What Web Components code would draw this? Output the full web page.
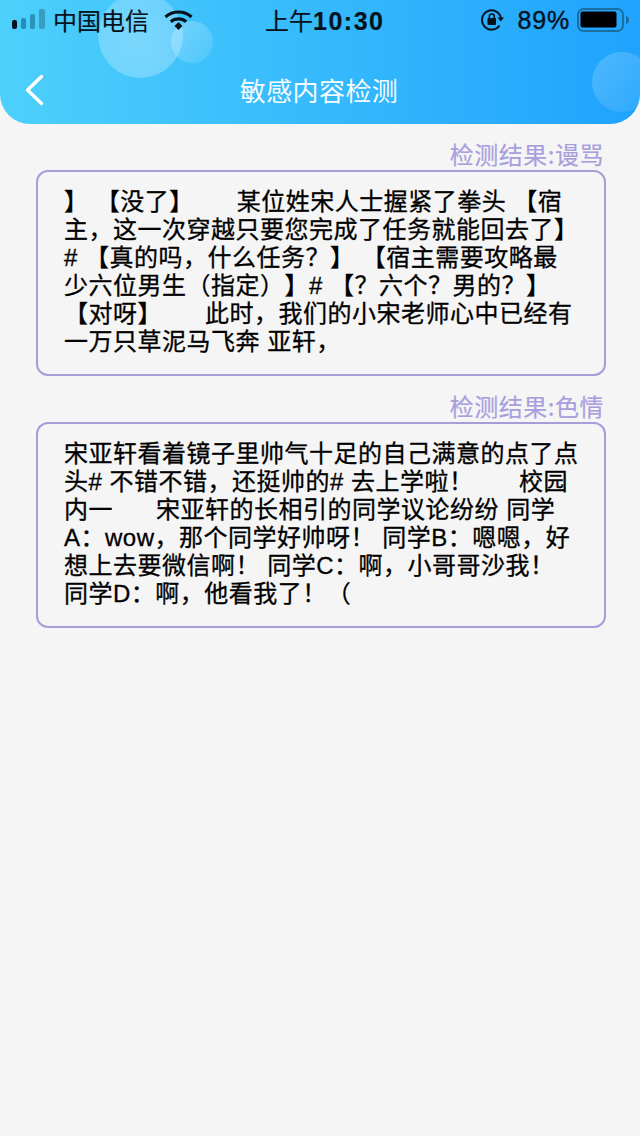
<!DOCTYPE html>
<html>
<head>
<meta charset="utf-8">
<style>
html,body{margin:0;padding:0;background:#f5f5f5;}
body{width:640px;height:1136px;overflow:hidden;font-family:"Noto Sans CJK SC","Liberation Sans",sans-serif;}
</style>
</head>
<body>
<app-page>
  <nav-header title-text="敏感内容检测"></nav-header>
  <result-card label="检测结果:谩骂">】 【没了】      某位姓宋人士握紧了拳头 【宿
主，这一次穿越只要您完成了任务就能回去了】
# 【真的吗，什么任务？】 【宿主需要攻略最
少六位男生（指定）】# 【？六个？男的？】
【对呀】      此时，我们的小宋老师心中已经有
一万只草泥马飞奔 亚轩，</result-card>
  <result-card label="检测结果:色情">宋亚轩看着镜子里帅气十足的自己满意的点了点
头# 不错不错，还挺帅的# 去上学啦！      &#8202;校园
内一      宋亚轩的长相引的同学议论纷纷 同学
A：wow，那个同学好帅呀！ 同学B：嗯嗯，好
想上去要微信啊！ 同学C：啊，小哥哥沙我！
同学D：啊，他看我了！（</result-card>
</app-page>
<script>
class AppPage extends HTMLElement{
    constructor(){
        super()
        const shadow=this.attachShadow({mode:"open"})
        shadow.innerHTML=`
        <style>
        :host{display:flex;flex-direction:column;width:640px;height:1136px;background:#f5f5f5;}
        .list{display:flex;flex-direction:column;gap:16px;padding:16px 34px 0 36px;}
        </style>
        <slot name="head"></slot>
        <div class="list"><slot></slot></div>`
    }
    connectedCallback(){
        const head=this.querySelector('nav-header')
        if(head) head.setAttribute('slot','head')
    }
}
customElements.define('app-page',AppPage);

class StatusBar extends HTMLElement{
    constructor(){
        super()
        const shadow=this.attachShadow({mode:"open"})
        shadow.innerHTML=`
        <style>
        :host{display:flex;align-items:center;height:40px;padding:0 11px 0 12px;color:#06121c;font-size:24px;line-height:40px;position:relative;}
        .left,.right{display:flex;align-items:center;}
        .carrier{margin-left:8px;-webkit-text-stroke:.2px #06121c;}
        .wifi{margin-left:15px;}
        .time{position:absolute;left:265px;top:0;white-space:nowrap;-webkit-text-stroke:.2px #06121c;}
        .time b{font-family:"Liberation Sans",sans-serif;font-weight:700;font-size:25px;letter-spacing:1.500px;}
        .right{margin-left:auto;}
        .pct{margin:0 7px 0 14px;font-family:"Liberation Sans",sans-serif;font-size:25px;letter-spacing:.8px;-webkit-text-stroke:.4px #06121c;}
        svg{display:block;}
        </style>
        <div class="left">
          <svg width="33" height="22" viewBox="0 0 33 22">
            <rect x="0" y="11" width="5" height="9" rx="2" fill="#06121c"/>
            <rect x="9" y="9" width="5" height="11" rx="2" fill="#1f8fb8"/>
            <rect x="18" y="5" width="5" height="15" rx="2" fill="#2a93b9"/>
            <rect x="27" y="0" width="6" height="20" rx="2" fill="#3a9cc0"/>
          </svg>
          <span class="carrier">中国电信</span>
          <svg class="wifi" width="29" height="22" viewBox="0 0 29 22" fill="none" stroke="#06121c" stroke-width="3.200">
            <path d="M1.500 8C8.800 1.300 20.200 1.300 27.500 8"/>
            <path d="M6.800 12.800C11.200 9 17.800 9 22.200 12.800"/>
            <path d="M10.500 17l4-4 4 4-4 4z" fill="#06121c" stroke="none"/>
          </svg>
        </div>
        <span class="time">上午<b>10:30</b></span>
        <div class="right">
          <svg width="23" height="22" viewBox="0 0 23 22" fill="none">
            <path d="M18.500 16.500A9.600 9.600 0 1 1 20 9" stroke="#06121c" stroke-width="2"/>
            <path d="M16.600 8.500h6.400l-3.200 4z" fill="#06121c"/>
            <rect x="6.500" y="9" width="8.500" height="7" rx="1" fill="#06121c"/>
            <path d="M8.300 9.500V7.500a2.500 2.500 0 0 1 5 0v2" stroke="#06121c" stroke-width="1.500"/>
          </svg>
          <span class="pct">89%</span>
          <svg width="52" height="24" viewBox="0 0 52 24">
            <rect x="1" y="1" width="45" height="22" rx="5.500" fill="none" stroke="#1a6f9f" stroke-width="2"/>
            <rect x="3.500" y="3.500" width="36" height="16" rx="2" fill="#000"/>
            <path d="M49 8c2 .4 3 2 3 4s-1 3.600-3 4z" fill="#1a6f9f"/>
          </svg>
        </div>`
    }
}
customElements.define('status-bar',StatusBar);

class NavHeader extends HTMLElement{
    constructor(){
        super();
        this.attachShadow({mode:'open'})
    }
    connectedCallback(){
        this.render()
    }
    render(){
        this.shadowRoot.innerHTML=`
        <style>
        :host{display:block;position:relative;height:124px;overflow:hidden;border-radius:0 0 30px 30px;background:linear-gradient(90deg,#4dd0fb 0%,#1fa3fd 100%);}
        .bubble{position:absolute;border-radius:50%;}
        .b1{left:98px;top:-7px;width:85px;height:85px;background:radial-gradient(circle at 50% 60%,rgba(255,255,255,.3),rgba(255,255,255,.2));}
        .b2{left:171px;top:21px;width:42px;height:42px;background:linear-gradient(135deg,rgba(255,255,255,.28),rgba(255,255,255,.08));}
        .b3{left:592px;top:52px;width:60px;height:60px;background:linear-gradient(135deg,rgba(255,255,255,.2),rgba(255,255,255,.06));}
        .content{position:relative;}
        .bar{display:grid;grid-template-columns:1fr auto 1fr;align-items:center;height:68px;padding-top:16px;}
        .back{margin-left:25px;}
        .title{color:#f4fbff;font-size:26px;letter-spacing:.4px;line-height:36px;margin-left:-2px;}
        </style>
        <div class="bubble b1"></div>
        <div class="bubble b2"></div>
        <div class="bubble b3"></div>
        <div class="content">
          <status-bar></status-bar>
          <div class="bar">
            <svg class="back" width="19" height="32" viewBox="0 0 19 32" fill="none" stroke="#fff" stroke-width="3.400" stroke-linecap="round" stroke-linejoin="round"><path d="M16.500 2.500L2.500 16l14 13.500"/></svg>
            <span class="title">${this.getAttribute('title-text')}</span>
            <span></span>
          </div>
        </div>`
    }
}
customElements.define('nav-header',NavHeader);

class ResultCard extends HTMLElement{
    constructor(){
        super();
        const shadow=this.attachShadow({mode:'open'})
        shadow.innerHTML=`
        <style>
        :host{display:block;}
        .label{text-align:right;color:#a99fdd;font-size:24px;letter-spacing:.5px;line-height:28px;padding:0 2px 2px 0;-webkit-text-stroke:.2px #a99fdd;}
        .box{box-sizing:border-box;height:206px;border:2px solid #a69dd9;border-radius:12px;padding:16px 12px 0 26px;color:#000;font-family:"Liberation Sans","Noto Sans CJK SC",sans-serif;font-size:24px;line-height:28px;letter-spacing:.5px;white-space:pre;text-spacing-trim:space-all;-webkit-text-stroke:.3px #000;}
        </style>
        <div class="label"></div>
        <div class="box"><slot></slot></div>`
    }
    connectedCallback(){
        this.shadowRoot.querySelector('.label').textContent=this.getAttribute('label')
    }
}
customElements.define('result-card',ResultCard);
</script>
</body>
</html>
